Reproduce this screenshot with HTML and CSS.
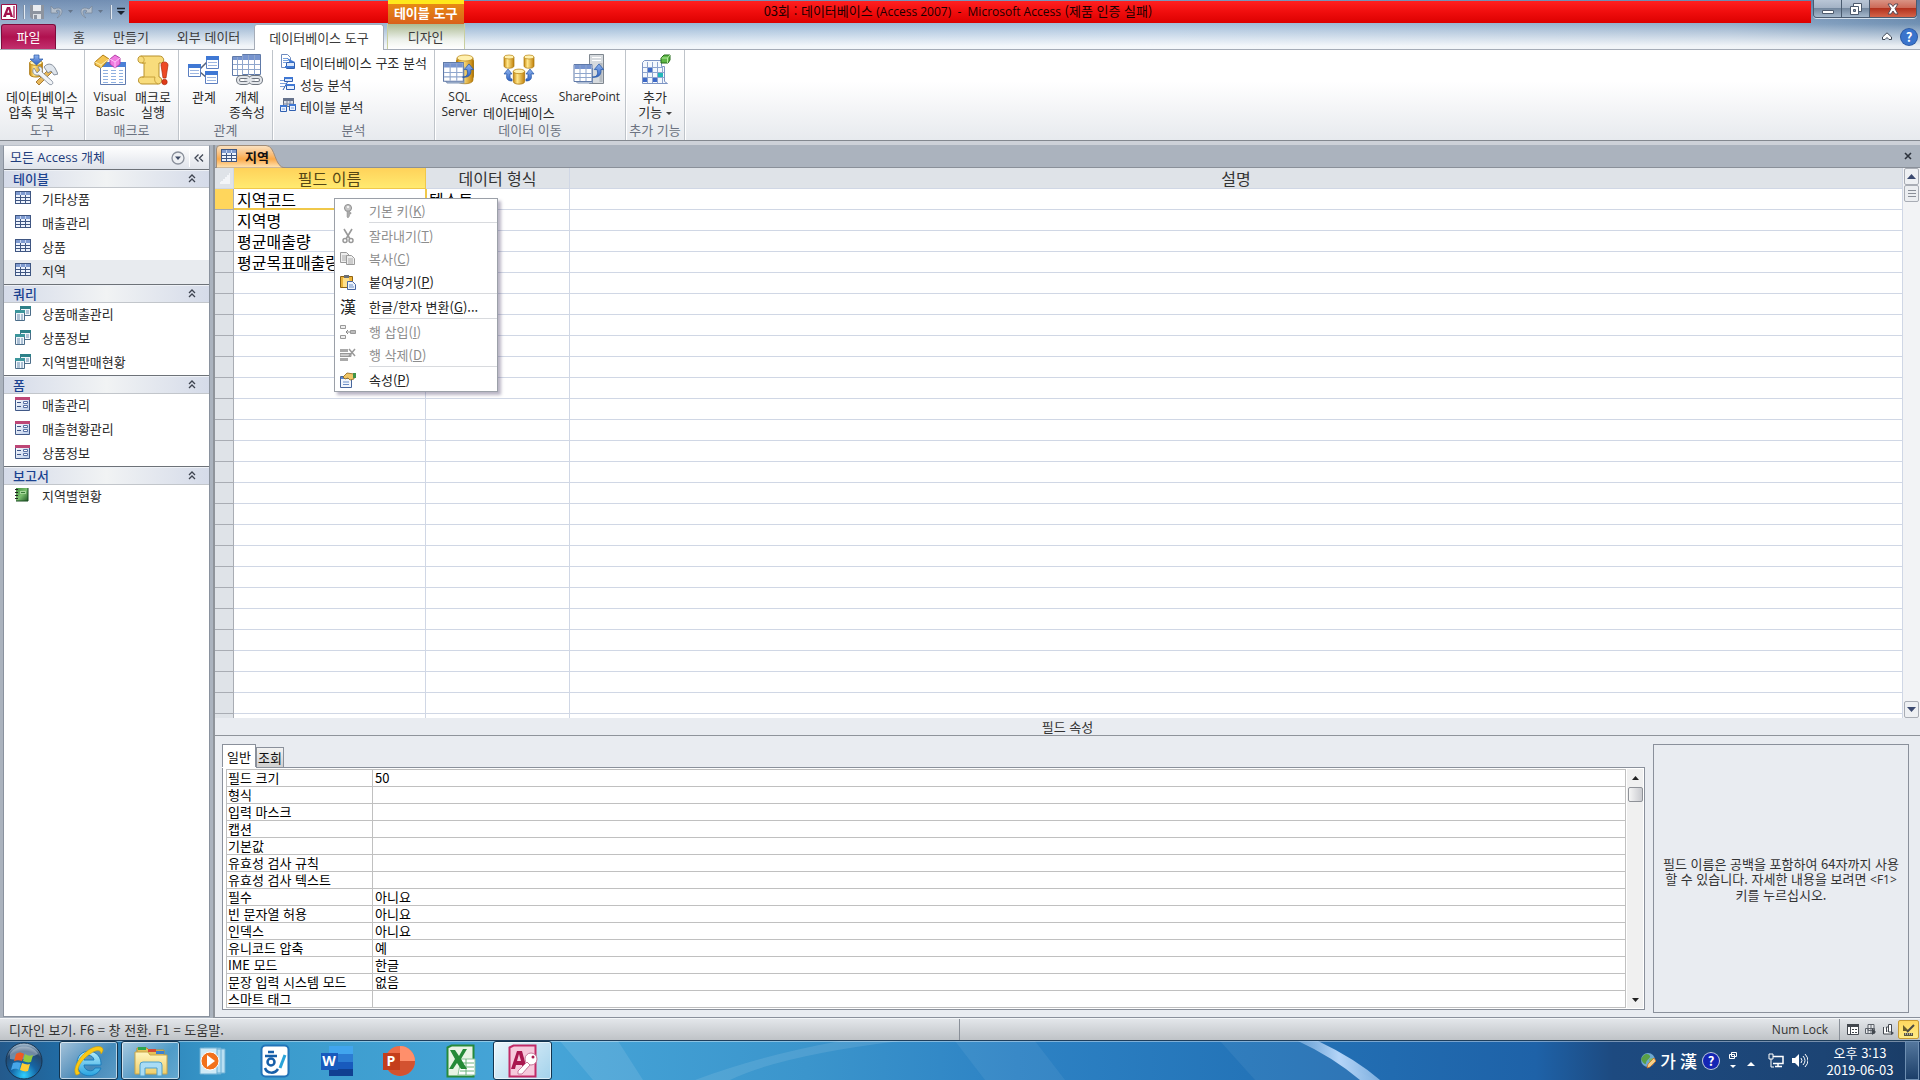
FILE: index.html
```html
<!DOCTYPE html>
<html lang="ko">
<head>
<meta charset="utf-8">
<title>03회 : 데이터베이스 - Microsoft Access</title>
<link rel="stylesheet" href="styles.css">
</head>
<body>
<svg class="sprite" aria-hidden="true">
  <defs>
    <linearGradient id="gold" x1="0" x2="1"><stop offset="0" stop-color="#c98a10"/><stop offset=".35" stop-color="#ffe68a"/><stop offset="1" stop-color="#c07f08"/></linearGradient>
    <linearGradient id="blue" x1="0" y1="0" x2="0" y2="1"><stop offset="0" stop-color="#8fb4f0"/><stop offset="1" stop-color="#2f62c0"/></linearGradient>
    <linearGradient id="cell" x1="0" y1="0" x2="1" y2="1"><stop offset="0" stop-color="#ffffff"/><stop offset="1" stop-color="#b9cbea"/></linearGradient>
    <linearGradient id="green" x1="0" y1="0" x2="1" y2="1"><stop offset="0" stop-color="#3f8c3c"/><stop offset=".5" stop-color="#7cc070"/><stop offset="1" stop-color="#1f5a24"/></linearGradient>
    <radialGradient id="orb" cx=".5" cy=".9" r=".9"><stop offset="0" stop-color="#2fd0ff"/><stop offset=".4" stop-color="#1565a5"/><stop offset=".75" stop-color="#24486e"/><stop offset="1" stop-color="#b5cbdc"/></radialGradient>
    <linearGradient id="ie" x1="0" y1="0" x2="0" y2="1"><stop offset="0" stop-color="#b6ecfb"/><stop offset="1" stop-color="#27a3e0"/></linearGradient>
    <linearGradient id="folder" x1="0" y1="0" x2="0" y2="1"><stop offset="0" stop-color="#fff6c0"/><stop offset="1" stop-color="#efce6b"/></linearGradient>
  </defs>
  <symbol id="i-table" viewBox="0 0 16 14"><path d="M0 0h16v13H0z" fill="#3f5682"/><path d="M1 1h14v3H1z" fill="#7f9bd0"/><path d="M1 4h4v2H1zM6 4h4v2H6zM11 4h4v2h-4zM1 7h4v2H1zM6 7h4v2H6zM11 7h4v2h-4zM1 10h4v2H1zM6 10h4v2H6zM11 10h4v2h-4z" fill="#edf3fd"/><path d="M5.500 1v3M10.500 1v3" stroke="#c4d3f0"/></symbol>
  <symbol id="i-query" viewBox="0 0 16 15"><path d="M5.500.5h10v9h-10z" fill="#f2f7fb" stroke="#4b6c88"/><path d="M5 0h11v3H5z" fill="#2d8088"/><path d="M7 5h3M11 5h3M11 7h3" stroke="#6789ad"/><path d="M.5 4.500h9v10h-9z" fill="#f2f7fb" stroke="#4b6c88"/><path d="M0 4h10v3H0z" fill="#3d969c"/><path d="M2 9h3M6 9h2M2 11h3M6 11h2M2 13h3M6 13h2" stroke="#6789ad"/></symbol>
  <symbol id="i-form" viewBox="0 0 16 14"><path d="M.5.5h14v13H.5z" fill="url(#cell)" stroke="#405887"/><path d="M0 0h15v3H0z" fill="#bd4676"/><path d="M2 5.500h4M2 9.500h4" stroke="#3e5688"/><path d="M8.500 4.500h4v2h-4zM8.500 8.500h4v2h-4z" fill="#fff" stroke="#5870a5"/></symbol>
  <symbol id="i-report" viewBox="0 0 14 14"><path d="M1 0h12v13H1z" fill="url(#green)"/><path d="M5 3h6v3H5z" fill="#a5d69a"/><path d="M6 4h4v1H6z" fill="#3a7a38"/><path d="M0 1.500h3M0 4.500h3M0 7.500h3M0 10.500h3" stroke="#222"/><path d="M13 0v13H1" fill="none" stroke="#184b20"/></symbol>
  <symbol id="i-chev2" viewBox="0 0 8 9"><path d="M1 4l3-3 3 3M1 8l3-3 3 3" fill="none" stroke="#3e4450" stroke-width="1.300"/></symbol>
  <symbol id="i-db" viewBox="0 0 12 15"><path d="M1 3v9c0 3 10 3 10 0V3z" fill="url(#gold)" stroke="#a8750d" stroke-width=".7"/><ellipse cx="6" cy="3" rx="5" ry="2" fill="#fff0ae" stroke="#b98512" stroke-width=".7"/></symbol>
  <symbol id="i-grid" viewBox="0 0 20 20"><path d="M2 17h17v2H4zM19 4v14" fill="#dfe8f5" stroke="#7d93b5"/><path d="M.5.500h18v17H.5z" fill="#fff" stroke="#607aa8"/><path d="M1 1h17v4H1z" fill="#7794cf"/><path d="M1 9.500h17M1 13.500h17M6.500 1v16M12.500 1v16" stroke="#8fa6cc"/></symbol>
  <symbol id="i-up" viewBox="0 0 12 16"><path d="M0 15c6 0 6-4 5-8H2l5-6 5 6H9c1 6-3 9-9 8z" fill="url(#blue)" stroke="#2455a5" stroke-width=".8"/></symbol>
</svg>

<header class="chrome">
  <div class="titlebar">
    <div class="quick">
      <svg width="16" height="16" viewBox="0 0 16 16"><path d="M.5.500h15v15H.5z" fill="#fff" stroke="#9b1145"/><path d="M2 13L6 3h3l3 10H9.500L9 11H5.500L5 13zM6.300 8.800h2.200L7.400 5.300z" fill="#a3124c"/><path d="M13 2v12" stroke="#c96590" stroke-width="2"/></svg>
      <i class="qsep"></i>
      <button class="qbtn" aria-label="저장"><svg width="14" height="14" viewBox="0 0 14 14"><path d="M0 0h14v14H2l-2-2z" fill="#8d949f"/><path d="M3 0h8v6H3z" fill="#e9ecf0"/><path d="M3 9h8v5H3z" fill="#dce0e5"/><path d="M4 10h3v4H4z" fill="#8d949f"/></svg></button>
      <button class="qbtn" aria-label="실행 취소"><svg width="24" height="14" viewBox="0 0 24 14"><path d="M1 1v7h7L6 6c4-3 6 2 1 7 8-4 6-13-3-9z" fill="#b4bfcc" stroke="#7b8a9d" stroke-width=".8"/><path d="M18 5h5l-2.500 3z" fill="#66768b"/></svg></button>
      <button class="qbtn" aria-label="다시 실행"><svg width="24" height="14" viewBox="0 0 24 14"><path d="M12 1v7H5l2-2C3 3 1 8 6 13-2 9 0 0 9 4z" fill="#b4bfcc" stroke="#7b8a9d" stroke-width=".8"/><path d="M18 5h5l-2.500 3z" fill="#66768b"/></svg></button>
      <i class="qsep"></i>
      <svg width="8" height="9" viewBox="0 0 8 9"><path d="M0 1.500h8" stroke="#1b2430" stroke-width="1.500"/><path d="M0 4h8L4 8z" fill="#1b2430"/></svg>
    </div>
    <h1 class="title">03회 : 데이터베이스 <span class="en">(Access 2007)&nbsp; -&nbsp; Microsoft Access</span> (제품 인증 실패)</h1>
    <div class="winbtns">
      <button aria-label="최소화"><svg width="12" height="12" viewBox="0 0 12 12"><path d="M.5 7.500h11v3H.5z" fill="#fff" stroke="#4d5a6d"/></svg></button>
      <button aria-label="이전 크기로"><svg width="12" height="12" viewBox="0 0 12 12"><path d="M3.500.5h8v8h-8z" fill="#fff" stroke="#4d5a6d"/><path d="M.5 3.500h8v8h-8z" fill="#fff" stroke="#4d5a6d"/><path d="M3.500 6.500h2v2h-2z" fill="#8b9bb2" stroke="#4d5a6d"/></svg></button>
      <button class="close" aria-label="닫기"><svg width="12" height="12" viewBox="0 0 12 12"><path d="M1 1h3l2 2.500L8 1h3L8 5.700 11 11H8L6 8l-2 3H1l3-5.300z" fill="#fff" stroke="#5a4a55"/></svg></button>
    </div>
  </div>
  <nav class="tabs">
    <button class="tab file">파일</button>
    <button class="tab">홈</button>
    <button class="tab">만들기</button>
    <button class="tab">외부 데이터</button>
    <button class="tab active">데이터베이스 도구</button>
    <button class="tab design"><span class="context">테이블 도구</span>디자인</button>
    <div class="help">
      <svg width="10" height="9" viewBox="0 0 10 9"><path d="M.5 5L5 .800 9.500 5v2.500H7L5 5.500l-2 2H.5z" fill="#fff" stroke="#3c4654"/></svg>
      <button class="helpbtn" aria-label="도움말">?</button>
    </div>
  </nav>
</header>

<section class="ribbon">
  <div class="group g-tool">
    <div class="cmds">
      <button class="big"><svg width="32" height="32" viewBox="0 0 32 32"><use href="#i-db" x="1" y="5" width="18" height="19" preserveAspectRatio="none"/><path d="M8 1h5v4h4l-6.500 6L4 5h4z" fill="url(#blue)" stroke="#2455a5" stroke-width=".7"/><path d="M23 15L10 28l3 3 13-13z" fill="#e8b85a" stroke="#94641a" stroke-width=".8"/><path d="M18 13c3-4 8-4 11 1l3 6-4 1-3-4-3 2z" fill="#dfe5ec" stroke="#707a88" stroke-width=".8"/><path d="M8 14c-3 4 0 8 5 7l10 9c3 2 5-1 3-3L16 18c1-4-1-6-4-5l2 3-3 3z" fill="#f1f4f7" stroke="#788494" stroke-width=".8"/></svg><span>데이터베이스<br>압축 및 복구</span></button>
    </div>
    <h2>도구</h2>
  </div>
  <div class="group g-macro">
    <div class="cmds">
      <button class="big"><svg width="32" height="32" viewBox="0 0 32 32"><path d="M6.500 8.500h25v22h-25z" fill="#fff" stroke="#5f7bb0"/><path d="M6 8h26v5H6z" fill="#4b80d6"/><path d="M9 16.500h5M9 19.500h5M9 22.500h5M9 25.500h5M9 28.500h5M17 16.500h5M17 19.500h5M17 22.500h5M17 25.500h5M17 28.500h5M25 16.500h4M25 19.500h4M25 22.500h4M25 25.500h4M25 28.500h4" stroke="#8fb0e0"/><path d="M1 8l8-7 6 4-8 9-6-3z" fill="#f4c552" stroke="#b27d11"/><path d="M1 8l6 3 8-6M7 11v3" fill="none" stroke="#fff0b0"/><path d="M16 5l5-4 5 3v6l-5 4-5-4z" fill="#f07be0" stroke="#b43fa8"/><path d="M16 5l5 3 5-4M21 8v6" fill="none" stroke="#ffc4f8"/></svg><span class="en">Visual<br>Basic</span></button>
      <button class="big"><svg width="32" height="32" viewBox="0 0 32 32"><path d="M4 2h18c5 0 6 5 3 7h-3v14c3 0 4 6 0 7H5c-4 0-5-6-1-7h3V9H4C0 9 0 2 4 2z" fill="#f8dc7c" stroke="#b7902b"/><path d="M4 2c4 1 4 6 1 7h4M5 23h13c-1 3 0 6 3 7" fill="none" stroke="#c9a23b"/><path d="M24 11c0-4 7-4 7 0l-2 13h-3z" fill="#ee4a25" stroke="#a92a0c" stroke-width=".7"/><circle cx="27.500" cy="28" r="2.700" fill="#e03a18" stroke="#a92a0c" stroke-width=".7"/></svg><span>매크로<br>실행</span></button>
    </div>
    <h2>매크로</h2>
  </div>
  <div class="group g-rel">
    <div class="cmds">
      <button class="big"><svg width="32" height="32" viewBox="0 0 32 32"><path d="M12 15l9-9M12 18l7 6" stroke="#55627a" stroke-width="1.500"/><g fill="#fff" stroke="#5c7fc0"><path d="M.5 11.500h12v11H.5zM18.500 3.500h12v11h-12zM17.500 18.500h12v11h-12z"/></g><path d="M0 10h13v4H0zM18 2h13v4H18zM17 17h13v4H17z" fill="#3f78d4"/><path d="M2 16.500h9M2 19.500h9M20 8.500h9M20 11.500h9M19 23.500h9M19 26.500h9" stroke="#9db7e2"/></svg><span>관계</span></button>
      <button class="big"><svg width="32" height="32" viewBox="0 0 32 32"><path d="M1.500 2.500h10v-2h18v20h-18v1h-10z" fill="#fff" stroke="#607aa8"/><path d="M2 3h10V1h17v5H2z" fill="#7794cf"/><path d="M2 10.500h27M2 15.500h27M6.500 3v18M11.500 1v20M17.500 1v20M23.500 1v20" stroke="#8fa6cc"/><g fill="none" stroke="#6d747d" stroke-width="4"><rect x="7" y="23" width="11" height="6" rx="3"/><rect x="19" y="23" width="11" height="6" rx="3"/></g><g fill="none" stroke="#e3e6ea" stroke-width="2"><rect x="7" y="23" width="11" height="6" rx="3"/><rect x="19" y="23" width="11" height="6" rx="3"/><path d="M13 26h11"/></g></svg><span>개체<br>종속성</span></button>
    </div>
    <h2>관계</h2>
  </div>
  <div class="group g-anal">
    <div class="cmds list">
      <button class="small"><svg width="16" height="16" viewBox="0 0 16 16"><path d="M1.500.5h6l3 3v10h-9z" fill="#fff" stroke="#6e8cc0"/><path d="M3 4.500h5M3 6.500h5M3 8.500h3" stroke="#7aa0dc"/><path d="M6.500 8.500h8v6h-8z" fill="#d9e7fb" stroke="#2f5fb0"/><path d="M7 4l8 4-5 1z" fill="#3f78d4"/><path d="M5 13h9" stroke="#3f78d4" stroke-width="2"/></svg>데이터베이스 구조 분석</button>
      <button class="small"><svg width="16" height="16" viewBox="0 0 16 16"><path d="M4.500 1.500h8v4h-8z" fill="#d9e7fb" stroke="#2f5fb0"/><path d="M0 4.500h4M0 7.500h6M0 10.500h5" stroke="#7aa0dc"/><path d="M8 5L3 14M6 9h8" stroke="#2f5fb0"/><path d="M6.500 8.500h8v5h-8z" fill="#e9f1fd" stroke="#2f5fb0"/><path d="M6 8h9v2H6zM4 1h9v2H4z" fill="#3f78d4"/></svg>성능 분석</button>
      <button class="small"><svg width="16" height="16" viewBox="0 0 16 16"><path d="M3.500.5h10v8h-10z" fill="#d9dde6" stroke="#5b6880"/><path d="M3 0h11v3H3z" fill="#66738c"/><path d="M7 3v6M10 3v6M3 6h11" stroke="#7a869c"/><path d="M.5 7.500h6v6h-6zM9.500 6.500h6v6h-6z" fill="#e9f1fd" stroke="#2f5fb0"/><path d="M0 7h7v2H0zM9 6h7v2H9z" fill="#3f78d4"/><path d="M2 11h3M11 10h3" stroke="#7aa0dc"/></svg>테이블 분석</button>
    </div>
    <h2>분석</h2>
  </div>
  <div class="group g-move">
    <div class="cmds">
      <button class="big"><svg width="32" height="32" viewBox="0 0 32 32"><use href="#i-db" x="12" y="0" width="20" height="29" style="--n:0"/><path d="M14 4v22c0 5 16 5 16 0V4z" fill="url(#gold)" stroke="#a8750d" stroke-width=".7"/><ellipse cx="22" cy="4" rx="8" ry="3" fill="#fff0ae" stroke="#b98512" stroke-width=".7"/><use href="#i-grid" x="0" y="8" width="22" height="22"/><use href="#i-up" x="19" y="9" width="12" height="15"/></svg><span class="en">SQL<br>Server</span></button>
      <button class="big"><svg width="32" height="32" viewBox="0 0 32 32"><use href="#i-db" x="0" y="0" width="12" height="15"/><use href="#i-db" x="20" y="0" width="12" height="15"/><use href="#i-db" x="9" y="14" width="14" height="17"/><path d="M9 27c-6 0-6-4-5-7H1l4-5 4 5H7c0 3 0 5 2 5zM23 27c6 0 6-4 5-7h3l-4-5-4 5h2c0 3 0 5-2 5z" fill="url(#blue)" stroke="#2455a5" stroke-width=".7"/></svg><span><span class="en">Access</span><br>데이터베이스</span></button>
      <button class="big"><svg width="32" height="32" viewBox="0 0 32 32"><path d="M16.500.5h14v29h-14z" fill="#d6dade" stroke="#7f878f"/><path d="M19 3.500h9M19 6.500h9" stroke="#fff"/><path d="M28 9v19" stroke="#b5bbc1" stroke-width="3"/><use href="#i-grid" x="0" y="10" width="21" height="20"/><use href="#i-up" x="19" y="9" width="12" height="15"/></svg><span class="en">SharePoint</span></button>
    </div>
    <h2>데이터 이동</h2>
  </div>
  <div class="group g-add">
    <div class="cmds">
      <button class="big"><svg width="32" height="32" viewBox="0 0 32 32"><path d="M3.500 8.500l2-2h17v6h3v15l3 2h-25z" fill="#f4f8fd" stroke="#7d95c4"/><path d="M4 13.500h20M4 18.500h21M4 23.500h21M8.500 8v21M13.500 8v21M18.500 8v21M23.500 12v17" stroke="#8ea5cf"/><path d="M9 14h4v4H9zM4 24h4v4H4zM14 24h4v4h-4z" fill="#3d69c8"/><path d="M19 19h5v4h-5z" fill="#22b8b8"/><path d="M22 4l3-3h6v5l-2 3h-7z" fill="#5fb847" stroke="#256b1c"/><path d="M22.500 4h6v5M28.500 4L31 1" fill="none" stroke="#b5eaa0"/></svg><span>추가<br>기능 <i class="caret"></i></span></button>
    </div>
    <h2>추가 기능</h2>
  </div>
</section>

<main class="work">
  <aside class="nav">
    <div class="navhead"><h2>모든 Access 개체</h2>
      <svg width="14" height="14" viewBox="0 0 14 14"><circle cx="7" cy="7" r="6" fill="#eef0f3" stroke="#8a909b" stroke-width="1.300"/><path d="M4 5.500h6L7 9z" fill="#3f4b66"/></svg>
      <i></i>
      <svg width="10" height="8" viewBox="0 0 10 8"><path d="M4.500.5L1 4l3.500 3.500M9 .5L5.500 4 9 7.500" fill="none" stroke="#3f4654" stroke-width="1.300"/></svg>
    </div>
    <h3>테이블<svg width="8" height="9"><use href="#i-chev2"/></svg></h3>
    <ul>
      <li><svg width="16" height="14"><use href="#i-table"/></svg>기타상품</li>
      <li><svg width="16" height="14"><use href="#i-table"/></svg>매출관리</li>
      <li><svg width="16" height="14"><use href="#i-table"/></svg>상품</li>
      <li class="sel"><svg width="16" height="14"><use href="#i-table"/></svg>지역</li>
    </ul>
    <h3>쿼리<svg width="8" height="9"><use href="#i-chev2"/></svg></h3>
    <ul>
      <li><svg width="16" height="15"><use href="#i-query"/></svg>상품매출관리</li>
      <li><svg width="16" height="15"><use href="#i-query"/></svg>상품정보</li>
      <li><svg width="16" height="15"><use href="#i-query"/></svg>지역별판매현황</li>
    </ul>
    <h3>폼<svg width="8" height="9"><use href="#i-chev2"/></svg></h3>
    <ul>
      <li><svg width="16" height="14"><use href="#i-form"/></svg>매출관리</li>
      <li><svg width="16" height="14"><use href="#i-form"/></svg>매출현황관리</li>
      <li><svg width="16" height="14"><use href="#i-form"/></svg>상품정보</li>
    </ul>
    <h3>보고서<svg width="8" height="9"><use href="#i-chev2"/></svg></h3>
    <ul>
      <li><svg width="16" height="14"><use href="#i-report" width="14" height="14"/></svg>지역별현황</li>
    </ul>
  </aside>

  <section class="doc">
    <div class="doctabs">
      <div class="doctab">
        <svg class="tabshape" width="70" height="23" viewBox="0 0 70 23"><defs><linearGradient id="tabfill" x1="0" y1="0" x2="0" y2="1"><stop offset="0" stop-color="#fbe3c3"/><stop offset=".4" stop-color="#f9bd78"/><stop offset=".6" stop-color="#fba949"/><stop offset="1" stop-color="#ffe7b8"/></linearGradient></defs><path d="M.5 23V4Q.5.500 4 .5h46c10 0 8 22 19 22.500z" fill="url(#tabfill)" stroke="#a08c78"/></svg>
        <svg width="16" height="14"><use href="#i-table"/></svg><span>지역</span>
      </div>
      <button class="docclose" aria-label="닫기"><svg width="8" height="8" viewBox="0 0 8 8"><path d="M1 1l6 6M7 1L1 7" stroke="#2d333d" stroke-width="1.600"/></svg></button>
    </div>
    <div class="sheet">
      <div class="gridwrap">
        <table class="grid">
          <colgroup><col class="c0"><col class="c1"><col class="c2"><col></colgroup>
          <thead><tr><th><i class="corner"></i></th><th class="on">필드 이름</th><th>데이터 형식</th><th>설명</th></tr></thead>
          <tbody>
            <tr class="cur"><th></th><td>지역코드</td><td>텍스트</td><td></td></tr>
            <tr><th></th><td>지역명</td><td></td><td></td></tr>
            <tr><th></th><td>평균매출량</td><td></td><td></td></tr>
            <tr><th></th><td>평균목표매출량</td><td></td><td></td></tr>
            <tr><th></th><td></td><td></td><td></td></tr>
            <tr><th></th><td></td><td></td><td></td></tr>
            <tr><th></th><td></td><td></td><td></td></tr>
            <tr><th></th><td></td><td></td><td></td></tr>
            <tr><th></th><td></td><td></td><td></td></tr>
            <tr><th></th><td></td><td></td><td></td></tr>
            <tr><th></th><td></td><td></td><td></td></tr>
            <tr><th></th><td></td><td></td><td></td></tr>
            <tr><th></th><td></td><td></td><td></td></tr>
            <tr><th></th><td></td><td></td><td></td></tr>
            <tr><th></th><td></td><td></td><td></td></tr>
            <tr><th></th><td></td><td></td><td></td></tr>
            <tr><th></th><td></td><td></td><td></td></tr>
            <tr><th></th><td></td><td></td><td></td></tr>
            <tr><th></th><td></td><td></td><td></td></tr>
            <tr><th></th><td></td><td></td><td></td></tr>
            <tr><th></th><td></td><td></td><td></td></tr>
            <tr><th></th><td></td><td></td><td></td></tr>
            <tr><th></th><td></td><td></td><td></td></tr>
            <tr><th></th><td></td><td></td><td></td></tr>
            <tr><th></th><td></td><td></td><td></td></tr>
            <tr><th></th><td></td><td></td><td></td></tr>
          </tbody>
        </table>
      </div>
      <div class="vscroll">
        <button aria-label="위로"><svg width="9" height="5" viewBox="0 0 9 5"><path d="M0 5h9L4.500 0z" fill="#3c4a70"/></svg></button>
        <div class="thumb"></div>
        <button class="down" aria-label="아래로"><svg width="9" height="5" viewBox="0 0 9 5"><path d="M0 0h9L4.500 5z" fill="#3c4a70"/></svg></button>
      </div>
      <div class="menu" role="menu">
        <button disabled><svg width="16" height="16" viewBox="0 0 16 16"><circle cx="8" cy="5" r="3.500" fill="#c6c6c6" stroke="#8d8d8d"/><circle cx="8" cy="4" r="1" fill="#fff"/><path d="M7 8h2.500v1.500H11V11H9.500v2L8 15l-1-1z" fill="#aaa" stroke="#8d8d8d" stroke-width=".5"/></svg><span>기본 키(<u>K</u>)</span></button>
        <hr>
        <button disabled><svg width="16" height="16" viewBox="0 0 16 16"><path d="M4 1l6 10M12 1L6 11" stroke="#999" stroke-width="1.600"/><circle cx="5" cy="12.500" r="2" fill="none" stroke="#999" stroke-width="1.500"/><circle cx="11" cy="12.500" r="2" fill="none" stroke="#999" stroke-width="1.500"/></svg><span>잘라내기(<u>T</u>)</span></button>
        <button disabled><svg width="16" height="16" viewBox="0 0 16 16"><path d="M.5 1.500h6l3 3v7h-9z" fill="#eee" stroke="#9a9a9a"/><path d="M2 5h5M2 7h5M2 9h4" stroke="#aaa"/><path d="M6.500 4.500h5l3 3v6h-8z" fill="#eee" stroke="#9a9a9a"/><path d="M8 8h5M8 10h5M8 12h5" stroke="#aaa"/></svg><span>복사(<u>C</u>)</span></button>
        <button><svg width="16" height="16" viewBox="0 0 16 16"><path d="M.5 2.500h12v11H.5z" fill="#edb53a" stroke="#8e6213"/><path d="M3 4h6l2 9H3z" fill="#ffe08b"/><path d="M4 1h5v3H4z" fill="#6b6f76"/><path d="M7.500 7.500h5l3 3v5h-8z" fill="#eef4fc" stroke="#4865a0"/><path d="M9 11h4M9 13h5" stroke="#6d8fc8"/></svg><span>붙여넣기(<u>P</u>)</span></button>
        <hr>
        <button><b class="hanja">漢</b><span>한글/한자 변환(<u>G</u>)...</span></button>
        <hr>
        <button disabled><svg width="16" height="16" viewBox="0 0 16 16"><path d="M.5 1.500h5v3h-5zM.5 11.500h5v3h-5z" fill="#eee" stroke="#999"/><path d="M10.500 6.500h5v3h-5z" fill="#bbb" stroke="#999"/><path d="M6 8h4M8 6L6 8l2 2" fill="none" stroke="#888"/></svg><span>행 삽입(<u>I</u>)</span></button>
        <button disabled><svg width="16" height="16" viewBox="0 0 16 16"><path d="M0 2h8v3H0zM0 11h8v3H0z" fill="#aaa"/><path d="M0 6.500h11v3H0z" fill="#ccc" stroke="#999"/><path d="M9 2l6 7M15 2L9 9" stroke="#999" stroke-width="1.500"/></svg><span>행 삭제(<u>D</u>)</span></button>
        <hr>
        <button><svg width="16" height="16" viewBox="0 0 16 16"><path d="M.5 4.500h11v11H.5z" fill="#f2f6fc" stroke="#48669c"/><path d="M1 5h10v2H1z" fill="#5986cf"/><path d="M3 10h6M3 12.500h6" stroke="#6d8fc8"/><path d="M3 5l4-4 7 1v5l-4 1-2-2-3 1z" fill="#f0c566" stroke="#8b6419" stroke-width=".8"/><path d="M13 1h3v5h-3z" fill="#3f9448"/></svg><span>속성(<u>P</u>)</span></button>
      </div>
    </div>
    <h2 class="caption">필드 속성</h2>
    <div class="props">
      <div class="proptabs"><button class="on">일반</button><button>조회</button></div>
      <div class="panel">
        <table class="ptable">
          <colgroup><col class="p1"><col></colgroup>
          <tr><th><label for="p0">필드 크기</label></th><td><input id="p0" value="50"></td></tr>
          <tr><th><label for="p1">형식</label></th><td><input id="p1"></td></tr>
          <tr><th><label for="p2">입력 마스크</label></th><td><input id="p2"></td></tr>
          <tr><th><label for="p3">캡션</label></th><td><input id="p3"></td></tr>
          <tr><th><label for="p4">기본값</label></th><td><input id="p4"></td></tr>
          <tr><th><label for="p5">유효성 검사 규칙</label></th><td><input id="p5"></td></tr>
          <tr><th><label for="p6">유효성 검사 텍스트</label></th><td><input id="p6"></td></tr>
          <tr><th><label for="p7">필수</label></th><td><input id="p7" value="아니요"></td></tr>
          <tr><th><label for="p8">빈 문자열 허용</label></th><td><input id="p8" value="아니요"></td></tr>
          <tr><th><label for="p9">인덱스</label></th><td><input id="p9" value="아니요"></td></tr>
          <tr><th><label for="p10">유니코드 압축</label></th><td><input id="p10" value="예"></td></tr>
          <tr><th><label for="p11">IME 모드</label></th><td><input id="p11" value="한글"></td></tr>
          <tr><th><label for="p12">문장 입력 시스템 모드</label></th><td><input id="p12" value="없음"></td></tr>
          <tr><th><label for="p13">스마트 태그</label></th><td><input id="p13"></td></tr>
        </table>
        <div class="pscroll">
          <svg width="7" height="4" viewBox="0 0 7 4"><path d="M0 4h7L3.500 0z" fill="#222"/></svg>
          <div class="pthumb"></div>
          <svg class="down" width="7" height="4" viewBox="0 0 7 4"><path d="M0 0h7L3.500 4z" fill="#222"/></svg>
        </div>
      </div>
      <p class="hint">필드 이름은 공백을 포함하여 64자까지 사용<br>할 수 있습니다. 자세한 내용을 보려면 <span class="en">&lt;F1&gt;</span><br>키를 누르십시오.</p>
    </div>
  </section>
</main>

<footer class="status">
  <span class="msg">디자인 보기. F6 = 창 전환. F1 = 도움말.</span>
  <span class="lock en">Num Lock</span>
  <div class="views">
    <button aria-label="데이터시트 보기"><svg width="12" height="11" viewBox="0 0 12 11"><path d="M.5.500h11v10H.5z" fill="#fff" stroke="#43484f"/><path d="M0 0h12v3H0z" fill="#43484f"/><path d="M3.500 3v8M5 5.500h2M8 5.500h2M5 8.500h2M8 8.500h2" stroke="#43484f"/></svg></button>
    <button aria-label="피벗 테이블 보기"><svg width="12" height="11" viewBox="0 0 12 11"><path d="M3 .5h6v6H3zM.5 4.500h9v5h-9zM6 .5v9M3 4v6" fill="#e8eaed" stroke="#5d636b"/><path d="M7 4l4 4-4 3z" fill="#43484f"/></svg></button>
    <button aria-label="피벗 차트 보기"><svg width="12" height="11" viewBox="0 0 12 11"><path d="M.5 3v7h9M3.500 8V3h2v5M5.500 8V.5h3V8z" fill="#fff" stroke="#43484f"/><path d="M8 7l3 2-3 2z" fill="#43484f"/></svg></button>
    <button class="on" aria-label="디자인 보기"><svg width="12" height="12" viewBox="0 0 12 12"><path d="M0 1v6h6z" fill="#6b5d2b"/><path d="M11 1L4 8" stroke="#4b4a45" stroke-width="2"/><path d="M1 10.500h9" stroke="#5b5640" stroke-width="3"/><path d="M2 10h1M4 10h1M6 10h1M8 10h1" stroke="#fff"/></svg></button>
  </div>
</footer>

<div class="taskbar">
  <svg class="aurora" viewBox="0 0 1920 40" preserveAspectRatio="none"><defs><linearGradient id="edge" x1="0" x2="1"><stop offset="0" stop-color="#a6ccf2" stop-opacity=".5"/><stop offset=".5" stop-color="#b5d5f8"/><stop offset="1" stop-color="#a6ccf2" stop-opacity=".7"/></linearGradient></defs><path d="M560 0h58l25 40h-50z" fill="#fff" opacity=".1"/><path d="M695 40Q760 15 840 0h60Q780 15 730 40z" fill="#fff" opacity=".1"/><path d="M955 0h80l30 40h-80z" fill="#fff" opacity=".06"/><path d="M1220 0h80l75 40h-120z" fill="#fff" opacity=".06"/><path d="M1298 0h20q37 18 62 40h-20q-28-24-62-40z" fill="url(#edge)"/></svg>
  <button class="start" aria-label="시작"><svg width="38" height="38" viewBox="0 0 38 38"><circle cx="19" cy="19" r="18" fill="url(#orb)" stroke="#17334f"/><path d="M5 12C10 2 28 2 33 12c-8 4-18 7-28 5z" fill="#fff" opacity=".35"/><path d="M11 12c3-2 5-2 8 0l-2 7c-3-1-5-1-8 0z" fill="#ee5a24"/><path d="M20 12c3 2 5 2 8 1l-2 7c-3 1-5 0-8-1z" fill="#93c83e"/><path d="M8 21c3-1 5-1 8 0l-2 7c-3-2-5-1-8 0z" fill="#47a6e8"/><path d="M17 21c3 1 5 2 8 1l-2 7c-3 1-5 0-8-1z" fill="#ffcc33"/></svg></button>
  <button class="app open" aria-label="Internet Explorer"><svg width="34" height="34" viewBox="0 0 34 34"><path d="M29 21H12c0 6 9 8 11 3h6C24 36 5 34 5 19 5 3 30 3 29 21zM12 16h10c-1-6-9-6-10 0z" fill="url(#ie)" stroke="#1b7dbd"/><path d="M4 31C-2 22 17-1 29 3c4 2 1 6 0 7 0-4-4-5-11 0C9 16 3 26 8 29c-1 1-2 2-4 2z" fill="#fbc914" stroke="#c99a0b" stroke-width=".6"/></svg></button>
  <button class="app open" aria-label="탐색기"><svg width="34" height="32" viewBox="0 0 34 32"><path d="M3 3h10l2 2h15v22H3z" fill="#e6c25a" stroke="#b7912f"/><path d="M4 2h8v3H4z" fill="#2ca54c"/><path d="M14 4h8v3h-8z" fill="#d64a35"/><path d="M22 6h8v3h-8z" fill="#3c80d0"/><path d="M1 7h13l2 3h17v19H1z" fill="url(#folder)" stroke="#c9a548"/><path d="M6 31V20q0-3 3-3h16q3 0 3 3v11h-5v-8H11v8z" fill="#a9dcf5" stroke="#4d9fcc"/></svg></button>
  <button class="app" aria-label="Media Player"><svg width="30" height="30" viewBox="0 0 30 30"><path d="M10 3h17v24H10zM6 2h17v26H6z" fill="#b9dff2" stroke="#6aaed3"/><path d="M2 2h17v26H2z" fill="#cfeaf7" stroke="#6aaed3"/><circle cx="12" cy="15" r="9" fill="#f2711c" stroke="#fff"/><path d="M9 9l8 6-8 6z" fill="#fff"/></svg></button>
  <button class="app" aria-label="한글"><svg width="30" height="34" viewBox="0 0 30 34"><rect x="1.500" y="1.500" width="27" height="31" rx="4" fill="#fff" stroke="#2274b8" stroke-width="2"/><path d="M8 8h6M5 12h12" stroke="#165ea8" stroke-width="2.500"/><circle cx="11" cy="18" r="3.500" fill="none" stroke="#165ea8" stroke-width="2.500"/><path d="M5 24c2 6 10 6 13 1" fill="none" stroke="#165ea8" stroke-width="2.500"/><path d="M25 11l-5 13" stroke="#2aa3d8" stroke-width="3"/></svg></button>
  <button class="app" aria-label="Word"><svg width="32" height="32" viewBox="0 0 32 32"><path d="M8 1h24v8H8z" fill="#41a5ee"/><path d="M8 9h24v8H8z" fill="#2b7cd3"/><path d="M8 17h24v7H8z" fill="#185abd"/><path d="M8 24h24v7H8z" fill="#103f91"/><path d="M0 8h17v17H0z" fill="#185abd"/><text x="8" y="21" class="glyph">W</text></svg></button>
  <button class="app" aria-label="PowerPoint"><svg width="32" height="32" viewBox="0 0 32 32"><circle cx="17" cy="16" r="15" fill="#ed6c47"/><path d="M17 1a15 15 0 0 1 15 15H17z" fill="#ff8f6b"/><path d="M2 16h30a15 15 0 0 1-30 0z" fill="#d35230"/><path d="M0 8h17v17H0z" fill="#c43e1c"/><text x="8" y="21" class="glyph">P</text></svg></button>
  <button class="app" aria-label="Excel"><svg width="30" height="34" viewBox="0 0 30 34"><path d="M1.500 3.500l4-2h22v31h-26z" fill="#e8f4e4" stroke="#278a3a" stroke-width="2"/><path d="M15 15h14v16H12z" fill="#fff" stroke="#8fc49a"/><path d="M14 19h14M14 23h14M14 27h14M20 15v16" stroke="#6db37c"/><path d="M4 6h5l4 6 4-7h4l-6 10 6 10h-6l-4-6-4 6H3l6-10z" fill="#258a37"/></svg></button>
  <button class="app open front" aria-label="Access"><svg width="30" height="34" viewBox="0 0 30 34"><path d="M1.500 3.500l4-2h22v31h-26z" fill="#f6c9dc" stroke="#c22a66" stroke-width="2"/><path d="M3 25L9 7h5l5 18h-4l-1-4H8l-1 4zM9 17h4l-2-7z" fill="#a9174f"/><circle cx="23" cy="15" r="6" fill="#fff" stroke="#c7789b"/><circle cx="25" cy="13" r="1.500" fill="#a9174f"/><path d="M19 18l-9 9v3h4l8-9z" fill="#fff" stroke="#c7789b"/></svg></button>
  <div class="tray">
    <svg width="16" height="16" viewBox="0 0 16 16"><circle cx="8" cy="7" r="7" fill="#6fa8cf"/><path d="M3 3c3-3 6-2 7 0S6 7 6 10 2 9 1 6z" fill="#5aa046"/><path d="M9 6l4-1 1 5-4 2z" fill="#7fbf5c"/><path d="M7 15l1-4 6-6 2 3-6 6z" fill="#f5d28b" stroke="#d06a20" stroke-width=".8"/></svg>
    <b>가</b><b>漢</b>
    <span class="q">?</span>
    <svg width="8" height="17" viewBox="0 0 8 17"><path d="M2.500.5h5v4h-5zM.5 2.500h5v4h-5z" fill="#1d4472" stroke="#fff"/><path d="M1 13h6l-3 3z" fill="#fff"/></svg>
    <svg class="show" width="8" height="4" viewBox="0 0 8 4"><path d="M0 4h8L4 0z" fill="#fff"/></svg>
    <svg width="16" height="15" viewBox="0 0 16 15"><path d="M5 3.500h10v7H5M7 13.500h7M10 11v2" fill="none" stroke="#fff" stroke-width="1.500"/><path d="M1 1h4v5H1zM3 6v8h3" fill="#1d4472" stroke="#fff"/></svg>
    <svg class="sound" width="16" height="15" viewBox="0 0 16 15"><path d="M0 5h3l4-4v13l-4-4H0z" fill="#fff"/><path d="M9 5q2 2.500 0 5M11 3q4 4.500 0 9M13 1q6 6.500 0 13" fill="none" stroke="#fff"/></svg>
    <div class="clock"><span>오후 3:13</span><span>2019-06-03</span></div>
    <button class="desk" aria-label="바탕 화면 보기"></button>
  </div>
</div>
</body>
</html>
```
FILE: styles.css
```css
* { box-sizing: border-box; margin: 0; padding: 0; }
html, body { height: 100%; }
body {
  display: flex;
  flex-direction: column;
  min-height: 100vh;
  overflow: hidden;
  font: 13px/15px "Noto Sans CJK KR", sans-serif;
  color: #2b2b2b;
  background: #abb3be;
}
button, input { font: inherit; color: inherit; background: none; border: 0; }
h1, h2, h3, th { font: inherit; }
ul { list-style: none; }
svg { display: block; flex: none; }
.sprite { position: absolute; width: 0; height: 0; }
.en { font-family: "Open Sans", sans-serif; font-size: 12px; }

/* Title bar and ribbon tabs */
.chrome {
  background:
    linear-gradient(180deg, rgba(60, 95, 145, .5), rgba(120, 155, 195, .25) 24px, rgba(255, 255, 255, .85) 46px),
    linear-gradient(90deg, #a9bdd3, #a3c0dc 30%, #b6cde4 60%, #9fb6ce 90%, #6f8eae);
}
.titlebar { display: flex; height: 24px; padding-top: 1px; }
.quick { display: flex; align-items: center; gap: 6px; width: 129px; padding: 0 1px 2px; }
.qbtn { display: flex; }
.qsep { width: 1px; height: 14px; background: #7f90a6; box-shadow: 1px 0 #e3eaf2; }
.title {
  flex: 1;
  height: 22px;
  padding-right: 24px;
  line-height: 20px;
  text-align: center;
  color: #1c0000;
  background: linear-gradient(#ff2020, #f00d0d 50%, #dc0000);
}
.winbtns {
  display: flex;
  height: 18px;
  margin: -1px 3px 0 2px;
  border: 1px solid #4a5b70;
  border-top: 0;
  border-radius: 0 0 4px 4px;
  box-shadow: 0 1px #d5e0ec;
  overflow: hidden;
}
.winbtns button {
  display: grid;
  place-items: center;
  width: 28px;
  border-right: 1px solid #4a5b70;
  background: linear-gradient(#b9c6d6, #a4b3c6 45%, #74889f 50%, #a5b8cc);
}
.winbtns .close { width: 46px; border: 0; background: linear-gradient(#d99384, #cd6a58 45%, #b3321e 50%, #d4644a); }

.tabs { display: flex; height: 26px; border-bottom: 1px solid #a5acb7; padding-left: 1px; }
.tab { padding: 0 14px; line-height: 24px; color: #3b3b3b; white-space: nowrap; }
.tab.file {
  width: 55px;
  margin-right: 3px;
  color: #fff;
  border: 1px solid #7d0b3b;
  border-bottom: 0;
  border-radius: 3px 3px 0 0;
  background: linear-gradient(#c23a72, #b0114f 50%, #c2306e);
}
.tab.active {
  height: 26px;
  padding: 0 14px;
  border: 1px solid #a5acb7;
  border-bottom: 0;
  border-radius: 3px 3px 0 0;
  background: #fff;
}
.tab.design {
  position: relative;
  width: 78px;
  margin-left: 3px;
  padding: 0;
  border: 1px solid #c9cf9f;
  border-width: 0 1px;
  background: linear-gradient(rgba(177, 188, 130, .8), rgba(240, 243, 232, .8) 60%, #fff);
}
.context {
  position: absolute;
  left: 0;
  right: 0;
  bottom: 100%;
  height: 24px;
  padding-top: 3px;
  line-height: 19px;
  font-weight: 700;
  color: #fff;
  background: linear-gradient(#ffe81c 4px, #e78a12 4px, #d9601b);
}
.help { display: flex; align-items: center; gap: 9px; margin-left: auto; padding-right: 3px; }
.helpbtn {
  width: 16px;
  height: 16px;
  border-radius: 8px;
  line-height: 15px;
  font-weight: 700;
  color: #fff;
  background: #3a74cc;
  box-shadow: 0 0 0 1px #2c5aa4;
}

/* Ribbon */
.ribbon {
  display: flex;
  height: 91px;
  border-bottom: 1px solid #83888f;
  background: linear-gradient(#fff 35%, #f4f5f7 65%, #e7eaee);
}
.group { display: flex; flex-direction: column; border-right: 1px solid #bfc4ca; box-shadow: 1px 0 #fff; }
.group h2 { text-align: center; height: 19px; line-height: 17px; color: #6b7280; white-space: nowrap; }
.g-tool { width: 85px; }
.g-macro, .g-rel { width: 94px; }
.g-anal { width: 162px; }
.g-move { width: 191px; }
.g-add { width: 59px; }
.cmds { display: flex; flex: 1; justify-content: center; }
.big {
  display: flex;
  flex-direction: column;
  align-items: center;
  gap: 3px;
  min-width: 43px;
  padding: 4px 2px 0;
  line-height: 15px;
  white-space: nowrap;
}
.caret {
  display: inline-block;
  vertical-align: middle;
  border: 3px solid transparent;
  border-top-color: #444;
  border-bottom: 0;
}
.cmds.list { flex-direction: column; justify-content: flex-start; align-items: flex-start; padding: 1px 0 0 7px; }
.small { display: flex; align-items: center; gap: 4px; height: 22px; white-space: nowrap; }

/* Work area */
.work { flex: 1; min-height: 0; display: flex; gap: 3px; padding-left: 3px; border-top: 4px solid #cdd1d8; }
.nav { width: 207px; background: #fff; border: 1px solid #8a929e; border-top-color: #b9bfc8; margin-bottom: 1px; }
.navhead {
  display: flex;
  align-items: center;
  gap: 4px;
  height: 23px;
  padding: 0 5px 0 6px;
  color: #1e3c7c;
  background: linear-gradient(#fff, #dfe3ea);
}
.navhead h2 { flex: 1; font-family: "Open Sans", "Noto Sans CJK KR", sans-serif; }
.navhead i { width: 1px; height: 18px; background: #fff; }
.nav h3 {
  display: flex;
  align-items: center;
  justify-content: space-between;
  height: 19px;
  padding: 0 13px 0 9px;
  border-top: 1px solid #6d7278;
  border-bottom: 1px solid #c2c6cb;
  font-weight: 500;
  color: #1b4290;
  background: linear-gradient(90deg, #d5dbe9, #f1f3f4 50%, #d5dbe9);
  box-shadow: inset 0 1px #eef1f6;
}
.nav li { display: flex; align-items: center; gap: 11px; height: 24px; padding: 0 0 4px 11px; }
.nav li.sel { background: #e8ebef; }

.doc { flex: 1; min-width: 0; display: flex; flex-direction: column; border-left: 2px solid #8f949b; background: #e9ecf1; }
.doctabs { display: flex; justify-content: space-between; height: 23px; border-bottom: 1px solid #8a9099; background: #abb3be; padding-left: 1px; }
.doctab { position: relative; display: flex; align-items: center; gap: 8px; padding-left: 5px; font-weight: 700; color: #111; }
.doctab > * { position: relative; }
.doctab .tabshape { position: absolute; left: 0; top: 0; }
.docclose { display: grid; place-items: center; width: 24px; }

.sheet { position: relative; flex: 1; min-height: 0; display: flex; background: #fff; }
.gridwrap { flex: 1; min-width: 0; overflow: hidden; }
.grid { width: 100%; table-layout: fixed; border-spacing: 0; font-size: 16px; line-height: 18px; color: #000; }
.grid .c0 { width: 19px; }
.grid .c1 { width: 192px; }
.grid .c2 { width: 144px; }
.grid th, .grid td { height: 21px; border: 1px solid #d0d7e5; border-width: 0 1px 1px 0; white-space: nowrap; }
.grid th { background: #dfe3e8; color: #333; text-align: center; }
.grid tbody th { border-color: #a9adb4; }
.grid td { padding: 0 3px; }
.grid .on { background: linear-gradient(#ffd25a, #ffea70); color: #554714; border-color: #f0c84a; }
.grid .cur th { background: #ffd65c; }
.grid .cur td:nth-child(2) { box-shadow: inset 0 -1px #f0c84a, 1px 0 #f0c84a; border-color: #f0c84a; }
.corner { display: block; width: 11px; height: 11px; margin-left: 4px; background: linear-gradient(135deg, transparent 50%, #f3f5f8 50%); }
.vscroll { display: flex; flex-direction: column; width: 17px; padding: 0 1px; background: #f2f3f5; }
.vscroll button { display: grid; place-items: center; height: 17px; border: 1px solid #a9adb5; border-radius: 2px; background: #eef0f3; }
.vscroll .thumb {
  height: 17px;
  border: 1px solid #a9adb5;
  border-radius: 2px;
  background: repeating-linear-gradient(#8a8f98 0 1px, #eceef1 1px 3px) center / 8px 7px no-repeat, #eceef1;
}
.vscroll .down { margin-top: auto; }

.menu {
  position: absolute;
  left: 119px;
  top: 30px;
  width: 164px;
  border: 1px solid #9ba0a8;
  background: #fff;
  box-shadow: 3px 3px 3px rgba(80, 70, 110, .4);
}
.menu button { display: flex; align-items: center; gap: 13px; width: 100%; height: 23px; padding: 0 5px; color: #222; white-space: nowrap; }
.menu button:disabled { color: #8d8d8d; }
.menu hr { height: 2px; margin-left: 34px; border: 0; border-top: 1px solid #d8dade; }
.hanja { width: 16px; font-size: 16px; font-weight: 400; }

.caption { height: 18px; text-align: center; line-height: 17px; color: #333; border-bottom: 1px solid #8f949b; }
.props { display: grid; grid-template-columns: 1fr 256px; grid-template-rows: 23px auto; column-gap: 8px; padding: 8px 11px 4px 7px; border-bottom: 1px solid #8a909b; }
.proptabs { display: flex; align-items: flex-end; }
.proptabs button { height: 20px; padding: 0 1px; border: 1px solid #8a909b; border-bottom: 0; background: linear-gradient(#f3f3f3, #cfcfcf); color: #111; }
.proptabs .on { position: relative; height: 23px; padding: 0 4px; background: #fff; box-shadow: 0 1px #fff; }
.panel { display: flex; gap: 1px; padding: 1px 1px 1px 3px; border: 1px solid #8a909b; background: #fff; margin-bottom: 3px; }
.ptable { flex: 1; table-layout: fixed; border-spacing: 0; border: 1px solid #c0c0c0; border-bottom: 0; color: #000; }
.ptable .p1 { width: 146px; }
.ptable th, .ptable td { height: 17px; border-bottom: 1px solid #c0c0c0; line-height: 16px; text-align: left; }
.ptable th { border-right: 1px solid #c0c0c0; padding-left: 1px; white-space: nowrap; }
.ptable label, .ptable input { display: block; height: 16px; line-height: 16px; }
.ptable input { width: 100%; padding: 0 2px; }
.pscroll { display: flex; flex-direction: column; align-items: center; width: 16px; padding: 7px 0 6px; background: #f0f0f0; }
.pthumb { width: 15px; height: 15px; margin-top: 7px; border: 1px solid #8f9298; border-radius: 2px; background: linear-gradient(90deg, #f5f5f5, #c9cacf); }
.pscroll .down { margin-top: auto; }
.hint { grid-column: 2; grid-row: 1 / 3; display: block; align-content: center; text-align: center; border: 1px solid #8a909b; color: #333; white-space: nowrap; }

/* Status bar */
.status {
  display: flex;
  align-items: center;
  height: 22px;
  padding-left: 9px;
  color: #333;
  border-top: 1px solid #f4f6f8;
  background: linear-gradient(#e3e6ea, #bfc3c7);
}
.msg { width: calc(50% - 5px); border-right: 1px solid #8a9099; line-height: 21px; }
.lock { margin-left: auto; padding-right: 11px; border-right: 1px solid #8a9099; line-height: 21px; }
.views { display: flex; padding: 0 1px 0 4px; }
.views button { display: grid; place-items: center; width: 18px; height: 19px; }
.views .on { width: 21px; border: 1px solid #c79a34; border-radius: 2px; background: linear-gradient(#ffd75e, #ffec86); }

/* Taskbar */
.taskbar {
  position: relative;
  display: flex;
  align-items: stretch;
  gap: 3px;
  height: 40px;
  padding: 0 0 0 5px;
  border-top: 1px solid #1f3f5d;
  background: linear-gradient(90deg, #245a8c, #2070aa 4%, #3a9acb 12%, #46a5d8 28%, #3b95cc 42%, #2d82c4 53%, #2474b8 65%, #1e62a8 80%, #1d4a80 84%, #1c4474 95%, #1a3c66);
  box-shadow: inset 0 1px rgba(255, 255, 255, .4);
}
.taskbar > * { position: relative; }
.taskbar .aurora { position: absolute; left: 0; top: 0; width: 100%; height: 100%; }
.start { width: 51px; }
.app { display: grid; place-items: center; width: 59px; }
.app.open {
  border: 1px solid #12344f;
  border-radius: 3px;
  background: linear-gradient(135deg, rgba(255, 255, 255, .6), rgba(255, 255, 255, .15) 60%, rgba(255, 255, 255, .25));
  box-shadow: inset 0 0 0 1px rgba(255, 255, 255, .6);
}
.app.front { background: linear-gradient(135deg, rgba(255, 255, 255, .9), rgba(255, 255, 255, .5)); }
.glyph { font: 700 14px "Open Sans", sans-serif; fill: #fff; text-anchor: middle; }
.tray { display: flex; align-items: center; gap: 4px; margin-left: auto; padding-right: 1px; color: #fff; }
.tray b { font-size: 17px; line-height: 20px; font-weight: 500; }
.tray .q {
  width: 16px;
  height: 16px;
  margin: 0 6px 0 2px;
  border-radius: 8px;
  font-weight: 700;
  text-align: center;
  background: #1425b4;
  box-shadow: 0 0 0 1px #c3cbe0;
}
.tray .show { margin: 6px 9px 0 6px; }
.tray .sound { margin: 0 7px 0 4px; }
.clock { display: flex; flex-direction: column; align-items: center; gap: 2px; width: 82px; }
.desk { align-self: stretch; width: 14px; border: 1px solid #6e8fb2; background: linear-gradient(#54779d, #1c3f69); }
```
